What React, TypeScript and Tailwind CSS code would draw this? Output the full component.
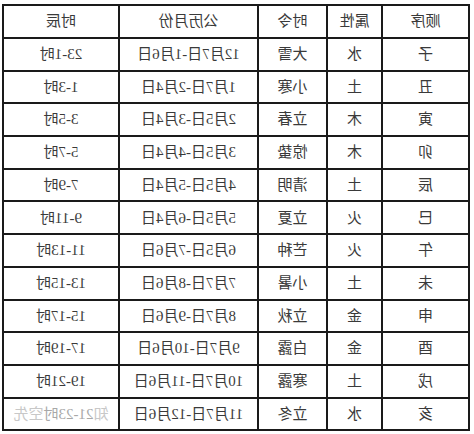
import React from 'react';

const rows: [string, string, string, string, string][] = [
  ['子', '水', '大雪', '12月7日-1月6日', '23-1时'],
  ['丑', '土', '小寒', '1月7日-2月4日', '1-3时'],
  ['寅', '木', '立春', '2月5日-3月4日', '3-5时'],
  ['卯', '木', '惊蛰', '3月5日-4月4日', '5-7时'],
  ['辰', '土', '清明', '4月5日-5月4日', '7-9时'],
  ['巳', '火', '立夏', '5月5日-6月4日', '9-11时'],
  ['午', '火', '芒种', '6月5日-7月6日', '11-13时'],
  ['未', '土', '小暑', '7月7日-8月6日', '13-15时'],
  ['申', '金', '立秋', '8月7日-9月6日', '15-17时'],
  ['酉', '金', '白露', '9月7日-10月6日', '17-19时'],
  ['戌', '土', '寒露', '10月7日-11月6日', '19-21时'],
  ['亥', '水', '立冬', '11月7日-12月6日', '21-23时'],
];

const cell = 'border-2 border-[#1a1a1a] text-center align-middle p-0';

const App: React.FC = () => {
  return (
    <div className="w-[474px] h-[434px] bg-white overflow-hidden pt-[4px] pl-[4px] font-['Liberation_Serif','Noto_Sans_CJK_SC',serif] text-[15px] text-[#3a3a3a]">
      {/* the source picture is a mirror image, so the whole table is flipped */}
      <div className="w-[466px] h-[425px] -scale-x-100">
        <table className="w-full h-full border-collapse table-fixed">
          <colgroup>
            <col className="w-[87px]" />
            <col className="w-[55px]" />
            <col className="w-[69px]" />
            <col className="w-[139px]" />
            <col className="w-[116px]" />
          </colgroup>
          <thead>
            <tr className="h-[33px]">
              <th className={`${cell} font-normal`}>顺序</th>
              <th className={`${cell} font-normal`}>属性</th>
              <th className={`${cell} font-normal`}>时令</th>
              <th className={`${cell} font-normal`}>公历月份</th>
              <th className={`${cell} font-normal`}>时辰</th>
            </tr>
          </thead>
          <tbody>
            {rows.map((r, i) => (
              <tr key={i} className="h-[32.7px]">
                {r.map((v, j) =>
                  j === 4 && i === 11 ? (
                    <td key={j} className={`${cell} whitespace-nowrap`}>
                      <span className="text-[#c8c8c8]">知</span>
                      <span className="text-[#a8a8a8]">{v}</span>
                      <span className="text-[#c8c8c8]">空先</span>
                    </td>
                  ) : (
                    <td key={j} className={cell}>
                      {v}
                    </td>
                  ),
                )}
              </tr>
            ))}
          </tbody>
        </table>
      </div>
    </div>
  );
};

export default App;
